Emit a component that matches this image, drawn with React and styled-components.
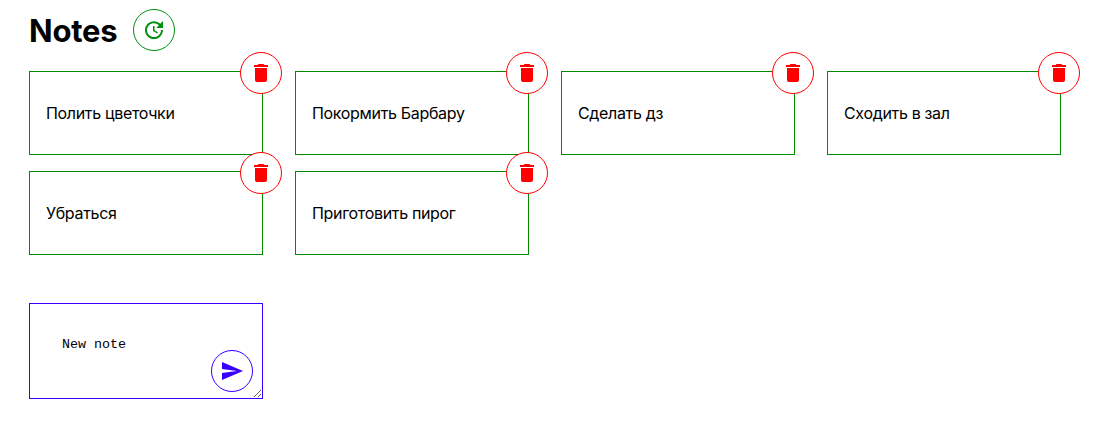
import React from "react";
import styled, { createGlobalStyle } from "styled-components";
import { MdUpdate, MdDelete, MdSend } from "react-icons/md";

const GlobalStyle = createGlobalStyle`
  * { box-sizing: border-box; }
  body { margin: 0; background: #fff; color: #000; font: 16px/24px Inter, sans-serif; }
`;

const Page = styled.main`
  padding: 9px 0 0 29px;
`;

const Header = styled.header`
  display: flex;
  align-items: center;
  height: 42px;
  margin-bottom: 20px;
`;

const Title = styled.h1`
  width: 104px;
  margin: 0;
  padding-top: 1px;
  font-size: 31px;
  line-height: 40px;
  font-weight: 700;
  letter-spacing: -0.2px;
`;

const RoundButton = styled.button`
  display: flex;
  align-items: center;
  justify-content: center;
  width: 42px;
  height: 42px;
  padding: 0;
  border: 1px solid ${(p) => p.$color};
  border-radius: 50%;
  background: #fff;
  color: ${(p) => p.$color};
  font-size: 24px;
`;

const Notes = styled.section`
  display: grid;
  grid-template-columns: repeat(4, 234px);
  gap: 16px 32px;
`;

const Note = styled.article`
  position: relative;
  display: flex;
  align-items: center;
  height: 84px;
  padding: 0 16px;
  border: 1px solid #008a00;
  letter-spacing: -0.33px;
`;

const DeleteButton = styled(RoundButton)`
  position: absolute;
  top: -20px;
  right: -20px;
`;

const Form = styled.form`
  position: relative;
  width: 234px;
  height: 96px;
  margin-top: 48px;
`;

const Input = styled.textarea`
  display: block;
  width: 234px;
  height: 96px;
  padding: 33px 32px 31px;
  border: 1px solid #3700ff;
  border-radius: 0;
  outline: none;
  background: #fff;
  font: 13.333px "Liberation Mono", monospace;
  color: #000;
  overflow: hidden;

  &::placeholder { color: #000; }
`;

const SendButton = styled(RoundButton)`
  position: absolute;
  right: 10px;
  bottom: 7px;
`;

const notes = [
  "Полить цветочки",
  "Покормить Барбару",
  "Сделать дз",
  "Сходить в зал",
  "Убраться",
  "Приготовить пирог",
];

export default function App() {
  return (
    <Page>
      <GlobalStyle />
      <Header>
        <Title>Notes</Title>
        <RoundButton $color="#009010" aria-label="Refresh"><MdUpdate /></RoundButton>
      </Header>
      <Notes>
        {notes.map((text) => (
          <Note key={text}>
            {text}
            <DeleteButton $color="#ff0000" aria-label="Delete"><MdDelete /></DeleteButton>
          </Note>
        ))}
      </Notes>
      <Form>
        <Input placeholder="New note" />
        <SendButton type="button" $color="#3700ff" aria-label="Send"><MdSend /></SendButton>
      </Form>
    </Page>
  );
}
